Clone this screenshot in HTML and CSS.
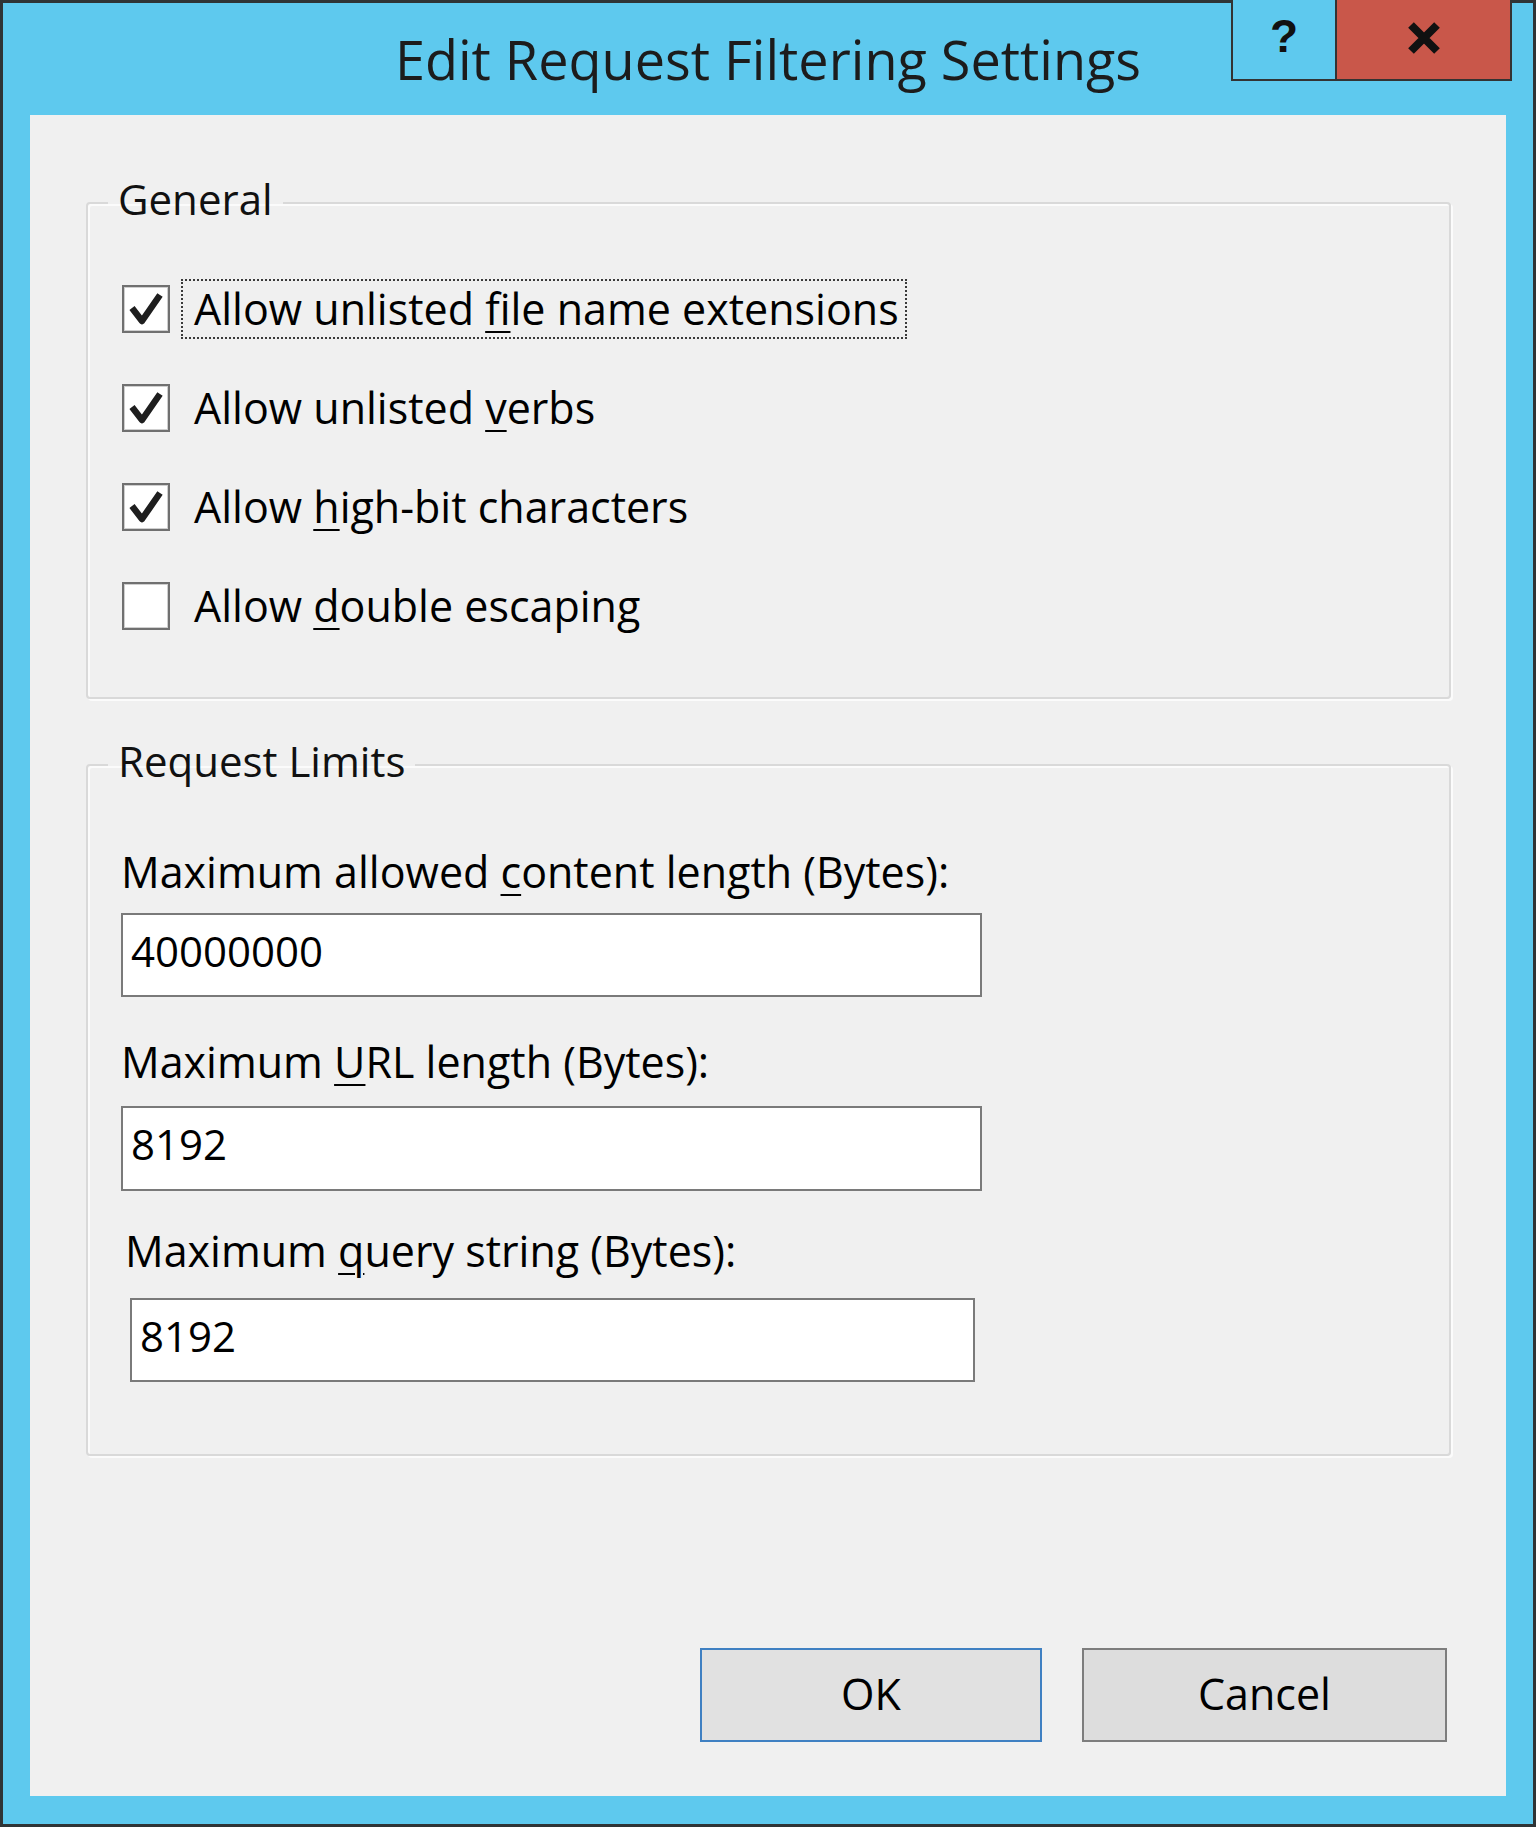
FILE: index.html
```html
<!DOCTYPE html>
<html lang="en">
<head>
<meta charset="utf-8">
<title>Edit Request Filtering Settings</title>
<link rel="stylesheet" href="styles.css">
</head>
<body>
<div class="window">
  <div class="titlebar"><span class="title">Edit Request Filtering Settings</span></div>
  <div class="controls">
    <div class="ctl help">?</div>
    <div class="ctl close">
      <svg width="40" height="34" viewBox="0 0 40 34" aria-hidden="true">
        <path d="M7 4 L33 30 M33 4 L7 30" stroke="#111" stroke-width="8" fill="none"/>
      </svg>
    </div>
  </div>
  <div class="client">
    <fieldset class="group general">
      <legend>General</legend>
      <div class="checks">
        <div class="check-row">
          <span class="box"><svg viewBox="0 0 44 44" aria-hidden="true"><polyline points="8,21 18,34 36,8" /></svg></span>
          <span class="label focus">Allow unlisted <u>f</u>ile name extensions</span>
        </div>
        <div class="check-row">
          <span class="box"><svg viewBox="0 0 44 44" aria-hidden="true"><polyline points="8,21 18,34 36,8" /></svg></span>
          <span class="label">Allow unlisted <u>v</u>erbs</span>
        </div>
        <div class="check-row">
          <span class="box"><svg viewBox="0 0 44 44" aria-hidden="true"><polyline points="8,21 18,34 36,8" /></svg></span>
          <span class="label">Allow <u>h</u>igh-bit characters</span>
        </div>
        <div class="check-row">
          <span class="box"></span>
          <span class="label">Allow <u>d</u>ouble escaping</span>
        </div>
      </div>
    </fieldset>
    <fieldset class="group limits">
      <legend>Request Limits</legend>
      <div class="field-label l1">Maximum allowed <u>c</u>ontent length (Bytes):</div>
      <div class="textbox t1">40000000</div>
      <div class="field-label l2">Maximum <u>U</u>RL length (Bytes):</div>
      <div class="textbox t2">8192</div>
      <div class="field-label l3">Maximum <u>q</u>uery string (Bytes):</div>
      <div class="textbox t3">8192</div>
    </fieldset>
    <div class="buttons">
      <div class="btn ok">OK</div>
      <div class="btn cancel">Cancel</div>
    </div>
  </div>
</div>
</body>
</html>
```
FILE: styles.css
```css
html, body {
  margin: 0;
  padding: 0;
  background: #2f2f2f;
}
body {
  font-family: "Open Sans", "Noto Sans", "Liberation Sans", sans-serif;
  color: #000;
}
.window {
  position: relative;
  width: 1536px;
  height: 1827px;
  box-sizing: border-box;
  border: 3px solid #2f3436;
  background: #5ec9ee;
  padding: 0 27px 28px 27px;
}
.titlebar {
  height: 112px;
  box-sizing: border-box;
  padding-top: 29px;
  display: flex;
  justify-content: center;
}
.title {
  font-size: 54px;
  line-height: 54px;
  color: #1c1c1c;
  white-space: nowrap;
}
.controls {
  position: absolute;
  top: -3px;
  right: 21px;
  display: flex;
  height: 81px;
}
.ctl {
  box-sizing: border-box;
  height: 81px;
  border-bottom: 2px solid #333;
  display: flex;
  align-items: center;
  justify-content: center;
}
.help {
  width: 106px;
  border-left: 2px solid #333;
  border-right: 2px solid #333;
  background: #5ec9ee;
  font-family: "Liberation Sans", Arial, sans-serif;
  font-weight: bold;
  font-size: 46px;
  line-height: 46px;
  color: #111;
  padding-bottom: 8px;
}
.close {
  width: 175px;
  border-right: 2px solid #333;
  background: #c9574a;
  padding-bottom: 4px;
}
.client {
  height: 1681px;
  box-sizing: border-box;
  background: #f0f0f0;
  padding: 63px 55px 0 56px;
}
.group {
  margin: 0;
  padding: 0 0 0 33px;
  border: 2px solid #d9d9d9;
  border-radius: 4px;
  box-shadow: inset 2px 2px 0 #fbfbfb, 2px 2px 0 #fbfbfb;
  min-inline-size: 0;
}
.group legend {
  font-size: 42px;
  line-height: 42px;
  padding: 0 10px 8px 10px;
  margin-left: -13px;
  color: #111;
}
.general {
  padding-top: 51px;
  padding-bottom: 61px;
}
.checks {
  display: flex;
  flex-direction: column;
  gap: 39px;
}
.check-row {
  display: flex;
  align-items: center;
  height: 60px;
}
.box {
  width: 48px;
  height: 48px;
  box-sizing: border-box;
  border: 2px solid #707070;
  box-shadow: inset 0 0 0 1px #cfcfcf;
  background: #fff;
  margin-left: 1px;
  flex: none;
  display: block;
}
.box svg {
  display: block;
  width: 44px;
  height: 44px;
}
.box polyline {
  fill: none;
  stroke: #1e1e1e;
  stroke-width: 6.5;
  stroke-linejoin: round;
}
.label {
  margin-left: 11px;
  height: 60px;
  box-sizing: border-box;
  border: 2px dotted transparent;
  padding: 0 6px 0 11px;
  font-size: 43px;
  line-height: 56px;
  white-space: nowrap;
}
.label.focus {
  border-color: #3a3a3a;
}
u {
  text-decoration-thickness: 2px;
  text-underline-offset: 6px;
}
.limits {
  margin-top: 41px;
  padding-top: 57px;
  padding-bottom: 72px;
}
.field-label {
  font-size: 43px;
  line-height: 50px;
  white-space: nowrap;
}
.l1 { margin-left: 0; }
.l2 { margin-left: 0; margin-top: 40px; }
.l3 { margin-left: 4px; margin-top: 35px; }
.textbox {
  box-sizing: border-box;
  height: 84px;
  border: 2px solid #7a7a7a;
  background: #fff;
  padding: 7px 0 0 8px;
  font-size: 42px;
  line-height: 57px;
}
.t1 { width: 861px; margin-top: 16px; }
.t2 { width: 861px; margin-top: 19px; height: 85px; }
.t3 { width: 845px; margin-top: 22px; margin-left: 9px; }
.buttons {
  display: flex;
  justify-content: flex-end;
  gap: 40px;
  margin-top: 192px;
  padding-right: 4px;
}
.btn {
  height: 94px;
  box-sizing: border-box;
  display: flex;
  align-items: center;
  justify-content: center;
  font-size: 43px;
  line-height: 50px;
  padding-bottom: 2px;
}
.ok {
  width: 342px;
  border: 2px solid #3f80c2;
  background: #e1e1e1;
}
.cancel {
  width: 365px;
  border: 2px solid #7d7d7d;
  background: #dddddd;
}
```
